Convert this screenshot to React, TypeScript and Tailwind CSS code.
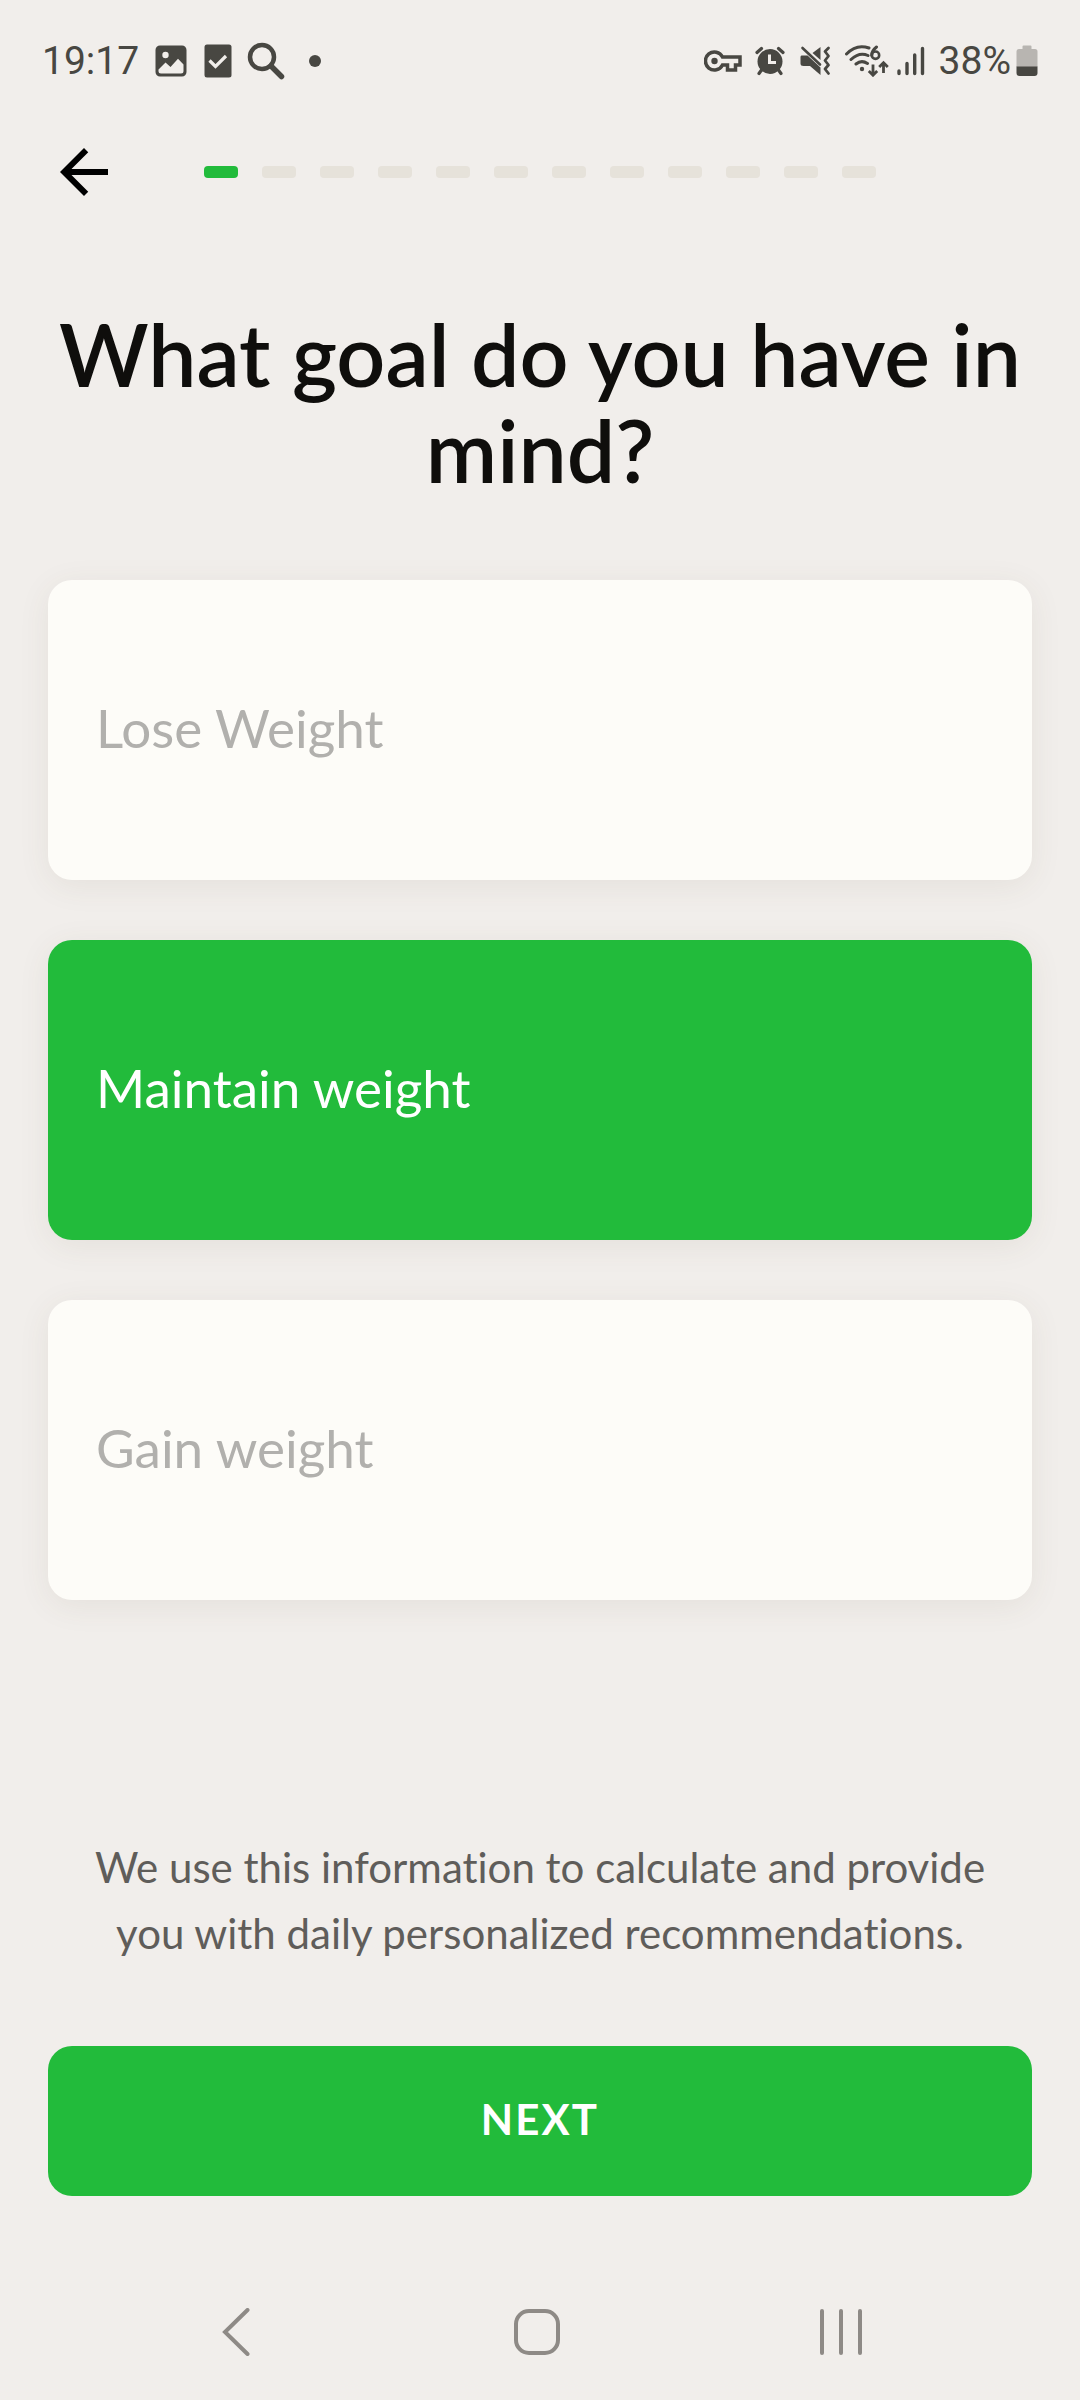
import { useState } from 'react'
import clsx from 'clsx'

const GOALS = ['Lose Weight', 'Maintain weight', 'Gain weight']
const TOTAL_STEPS = 12

function StatusBar() {
  return (
    <div className="flex items-center justify-between pt-9 pr-[42px] pl-[42px] font-['Roboto',sans-serif] text-[39px] leading-[50px] text-[#484742]">
      <div className="flex items-center">
        <span>19:17</span>
        {/* Gallery */}
        <svg className="ml-4 h-8 w-8" viewBox="0 0 32 32" fill="currentColor">
          <path
            fillRule="evenodd"
            d="M5 0.5h22a4.500 4.500 0 0 1 4.500 4.500v22a4.500 4.500 0 0 1-4.500 4.500H5A4.500 4.500 0 0 1 .5 27V5A4.500 4.500 0 0 1 5 .5ZM10.500 6.800a3.200 3.200 0 1 0 0 6.400 3.200 3.200 0 0 0 0-6.400ZM10.500 17.500 3.500 24.500V26a2.500 2.500 0 0 0 2.500 2.500h20a2.500 2.500 0 0 0 2.500-2.500v-6.500L23 13.800l-7.500 8.200Z"
          />
        </svg>
        {/* Tasks */}
        <svg className="ml-[17px] h-[34px] w-7" viewBox="0 0 28 34" fill="none">
          <rect x="0.500" y="0.500" width="27" height="33" rx="2.500" fill="currentColor" />
          <path d="m5.500 16.500 6 6L22 12" stroke="#f1eeeb" strokeWidth="3.200" />
        </svg>
        {/* Search */}
        <svg className="ml-[15px] h-[38px] w-[38px]" viewBox="0 0 38 38" fill="none" stroke="currentColor">
          <circle cx="15" cy="15" r="12" strokeWidth="4.500" />
          <path d="m24 24 10.500 10.500" strokeWidth="5.500" strokeLinecap="round" />
        </svg>
        <span className="ml-6 h-3 w-3 rounded-full bg-[#484742]" />
      </div>

      <div className="flex items-center">
        {/* VPN key */}
        <svg className="h-[22px] w-[38px]" viewBox="0 0 38 22" fill="none" stroke="currentColor">
          <path d="M18.500 7A9 9 0 1 0 18.500 15H23.500V20H31.500V15H36V7Z" strokeWidth="3.500" />
          <circle cx="10.500" cy="11" r="3.200" fill="currentColor" stroke="none" />
        </svg>
        {/* Alarm */}
        <svg className="ml-[13px] h-[30px] w-[30px]" viewBox="0 0 30 30" fill="none">
          <g stroke="currentColor" strokeWidth="3.200" strokeLinecap="round">
            <path d="M2 6.500 6.500 2.500M28 6.500 23.500 2.500M6.500 24 4 27.500M23.500 24l2.500 3.500" />
          </g>
          <circle cx="15" cy="15.500" r="12.500" fill="currentColor" />
          <path d="M14.500 8.500V16.500H21" stroke="#f1eeeb" strokeWidth="3" />
        </svg>
        {/* Vibrate */}
        <svg className="ml-[15px] h-[30px] w-[31px]" viewBox="0 0 31 30" fill="none" stroke="currentColor">
          <path
            d="M1.500 9.500H7.500L20.500 21.500V29L10 20H3.500Q.5 20 .5 17.500V11Q.5 9.500 1.500 9.500ZM20.500 1V14L12.500 7Z"
            fill="currentColor"
            stroke="none"
          />
          <path d="M2.500 2 20 18.500" strokeWidth="2.600" strokeLinecap="round" />
          <path
            d="m28.500 2-3.500 3.500 3.500 4.500-3.500 4.500 3.500 4.500-3.500 4 3.500 4.500"
            strokeWidth="2.800"
            strokeLinecap="round"
            strokeLinejoin="round"
          />
        </svg>
        {/* Wi-Fi 6 */}
        <svg className="ml-[14px] h-8 w-11" viewBox="0 0 44 32" fill="none" stroke="currentColor">
          <g strokeWidth="3" strokeLinecap="round">
            <path d="M1.500 9Q11.500-1.500 24 3M6 14.500Q14.500 6.500 23 10.500M11 19Q16.500 14.500 22.500 18.500" />
            <path d="M31.500 2Q26.500 6 26.700 10.500" />
          </g>
          <circle cx="30.500" cy="10.200" r="3.700" strokeWidth="2.600" />
          <circle cx="17" cy="24" r="2.200" fill="currentColor" stroke="none" />
          <path d="M28 19.500V30M23.800 26l4.200 4.200 4.200-4.200M38.500 28V18M34.200 22l4.300-4.300 4.300 4.300" strokeWidth="2.800" />
        </svg>
        {/* Signal strength */}
        <svg className="ml-2 h-[30px] w-7" viewBox="0 0 28 30" stroke="currentColor" strokeWidth="3.400" strokeLinecap="round">
          <path d="M2 25V27.500M10 17.500V27.500M17.700 9V27.500M25.500 2.500V27.500" />
        </svg>
        <span className="ml-[14px]">38%</span>
        {/* Battery */}
        <svg className="ml-[5px] h-8 w-[22px]" viewBox="0 0 22 32" fill="currentColor">
          <path d="M6.500 1.500Q6.500.5 7.500.5h7Q15.500.5 15.500 1.500V4H19q2.500 0 2.500 2.500V22H.5V6.500Q.5 4 3 4H6.500Z" fill="#b8b5b1" />
          <path d="M.5 21.500h21V28q0 3-3 3h-15q-3 0-3-3Z" />
        </svg>
      </div>
    </div>
  )
}

function ProgressHeader({ step }: { step: number }) {
  return (
    <header className="mt-[50px] flex items-center pl-12">
      <button type="button" aria-label="Back" className="text-black">
        <svg className="h-[72px] w-[72px]" viewBox="0 0 24 24" fill="currentColor">
          <path d="M20 11H7.830l5.590-5.590L12 4l-8 8 8 8 1.410-1.410L7.830 13H20v-2z" />
        </svg>
      </button>
      <div className="ml-[84px] flex gap-6">
        {Array.from({ length: TOTAL_STEPS }, (_, i) => (
          <span
            key={i}
            className={clsx('h-3 w-[34px] rounded', i < step ? 'bg-[#22bb3b]' : 'bg-[#e6e2da]')}
          />
        ))}
      </div>
    </header>
  )
}

function NavigationBar() {
  return (
    <nav className="mt-auto flex items-center justify-between pt-[108px] pr-[214px] pb-11 pl-[220px] text-[#8e8a86]">
      <button type="button" aria-label="System back">
        <svg className="h-12 w-9" viewBox="0 0 36 48" fill="none" stroke="currentColor" strokeWidth="4" strokeLinecap="round">
          <path d="M27.500 2 5 24l22.500 22" />
        </svg>
      </button>
      <button type="button" aria-label="Home">
        <svg className="h-12 w-12" viewBox="0 0 48 48" fill="none" stroke="currentColor" strokeWidth="4">
          <rect x="3" y="3" width="42" height="42" rx="13" />
        </svg>
      </button>
      <button type="button" aria-label="Recent apps">
        <svg className="h-12 w-12" viewBox="0 0 48 48" fill="none" stroke="currentColor" strokeWidth="4" strokeLinecap="round">
          <path d="M4 3v42M23 3v42M42 3v42" />
        </svg>
      </button>
    </nav>
  )
}

export default function App() {
  const [goal, setGoal] = useState('Maintain weight')

  return (
    <div className="flex min-h-screen flex-col bg-[#f1eeeb] font-['Lato',sans-serif] [font-variant-ligatures:none]">
      <StatusBar />
      <ProgressHeader step={1} />

      <main className="flex flex-col px-12">
        <h1 id="goal-title" className="mt-[98px] text-center text-[86px] leading-[96px] font-semibold text-[#0f0e0c]">
          What goal do you have in mind?
        </h1>

        <div role="radiogroup" aria-labelledby="goal-title" className="mt-[82px] flex flex-col gap-[60px]">
          {GOALS.map((option) => (
            <label
              key={option}
              className={clsx(
                'relative flex h-[300px] cursor-pointer items-center rounded-3xl px-12 pb-1 text-[53px] leading-[60px] shadow-[0_6px_32px_rgba(90,80,50,0.08)]',
                goal === option ? 'bg-[#22bb3b] text-white' : 'bg-[#fdfcf8] text-[#b1b0ad]',
              )}
            >
              <input
                type="radio"
                name="goal"
                value={option}
                checked={goal === option}
                onChange={() => setGoal(option)}
                className="sr-only"
              />
              {option}
            </label>
          ))}
        </div>

        <p className="mx-6 mt-[234px] text-center text-[42px] leading-[66px] text-[#5f5d5a]">
          We use this information to calculate and provide you with daily personalized recommendations.
        </p>

        <button
          type="button"
          className="mt-20 h-[150px] rounded-3xl bg-[#22bb3b] pb-1 text-[42px] font-bold tracking-wider text-white"
        >
          NEXT
        </button>
      </main>

      <NavigationBar />
    </div>
  )
}
